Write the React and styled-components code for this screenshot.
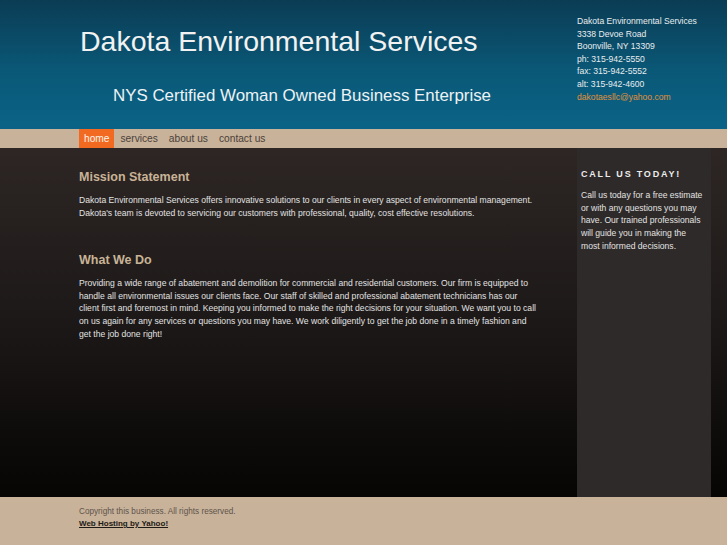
import styled, { createGlobalStyle } from 'styled-components'

const GlobalStyle = createGlobalStyle`
  html, body {
    margin: 0;
    padding: 0;
    background: #c8b29a;
  }
  body {
    font-family: "Liberation Sans", Arial, sans-serif;
  }
`

const Page = styled.div`
  display: flex;
  flex-direction: column;
  width: 727px;
  height: 545px;
  overflow: hidden;
`

const Header = styled.header`
  height: 129px;
  background: linear-gradient(to bottom, #0b3c54 0%, #0a5877 55%, #0a6386 100%);
  display: flex;
`

const Inner = styled.div`
  display: flex;
  width: 632px;
  margin-left: 79px;
`

const Branding = styled.div`
  flex: 1;
  display: flex;
  flex-direction: column;
  padding-top: 24px;
`

const Title = styled.h1`
  margin: 0 0 0 1px;
  font-weight: normal;
  font-size: 28.5px;
  line-height: 34px;
  color: #f2f2f2;
`

const Tagline = styled.div`
  margin: 28px 0 0 34px;
  font-size: 16.9px;
  line-height: 20px;
  color: #eef2f4;
`

const Contact = styled.address`
  width: 134px;
  padding-top: 15px;
  font-style: normal;
  font-size: 8.6px;
  line-height: 12.6px;
  color: #e8ecee;

  a {
    color: #e0913a;
    text-decoration: none;
  }
`

const Nav = styled.nav`
  height: 19px;
  background: #c8b29a;
  display: flex;
`

const NavItem = styled.a`
  display: flex;
  align-items: center;
  padding: 0 5px 0 ${p => (p.$first ? '5px' : '6px')};
  font-size: 10.2px;
  color: ${p => (p.$active ? '#fff4ea' : '#4b4139')};
  background: ${p => (p.$active ? '#f26a22' : 'transparent')};
  text-decoration: none;
`

const Body = styled.div`
  flex: 1;
  display: flex;
  background: linear-gradient(to bottom, #2d2624 0%, #1e1a19 45%, #060504 100%);
`

const Main = styled.main`
  width: 460px;
  margin-right: 38px;
  padding-top: 21px;
`

const Heading = styled.h2`
  margin: 0 0 9px 0;
  font-size: 12.5px;
  line-height: 16px;
  font-weight: bold;
  color: #c8b396;
`

const Para = styled.p`
  margin: 0 0 ${p => p.$gap || 0}px 0;
  font-size: 8.6px;
  line-height: 12.6px;
  color: #e2e2e2;
`

const Sidebar = styled.aside`
  width: 134px;
  background: #2e2a29;
  padding: 20px 4px 0 4px;
  box-sizing: border-box;
`

const SideHeading = styled.h3`
  margin: 0 0 9px 0;
  font-size: 9px;
  line-height: 12px;
  letter-spacing: 1.8px;
  font-weight: bold;
  color: #ececec;
`

const SideText = styled.p`
  margin: 0;
  font-size: 8.6px;
  line-height: 12.7px;
  color: #e2e2e2;
`

const Footer = styled.footer`
  height: 48px;
  background: #c8b29a;
  display: flex;
`

const FooterInner = styled.div`
  margin-left: 79px;
  padding-top: 9px;
  font-size: 8.2px;
  line-height: 12px;
  color: #5e544b;

  a {
    display: block;
    font-size: 8px;
    font-weight: bold;
    color: #1f1a16;
    text-decoration: underline;
  }
`

export default function App() {
  const links = ['home', 'services', 'about us', 'contact us']

  return (
    <>
      <GlobalStyle />
      <Page>
        <Header>
          <Inner>
            <Branding>
              <Title>Dakota Environmental Services</Title>
              <Tagline>NYS Certified Woman Owned Business Enterprise</Tagline>
            </Branding>
            <Contact>
              Dakota Environmental Services<br />
              3338 Devoe Road<br />
              Boonville, NY 13309<br />
              ph: 315-942-5550<br />
              fax: 315-942-5552<br />
              alt: 315-942-4600<br />
              <a href="#">dakotaesllc@yahoo.com</a>
            </Contact>
          </Inner>
        </Header>

        <Nav>
          <Inner>
            {links.map((l, i) => (
              <NavItem key={l} href="#" $active={i === 0} $first={i === 0}>{l}</NavItem>
            ))}
          </Inner>
        </Nav>

        <Body>
          <Inner>
            <Main>
              <Heading>Mission Statement</Heading>
              <Para $gap={33}>
                Dakota Environmental Services offers innovative solutions to our clients in every aspect of environmental management.
                Dakota's team is devoted to servicing our customers with professional, quality, cost effective resolutions.
              </Para>
              <Heading>What We Do</Heading>
              <Para>
                Providing a wide range of abatement and demolition for commercial and residential customers. Our firm is equipped to
                handle all environmental issues our clients face. Our staff of skilled and professional abatement technicians has our
                client first and foremost in mind. Keeping you informed to make the right decisions for your situation. We want you to call
                on us again for any services or questions you may have. We work diligently to get the job done in a timely fashion and
                get the job done right!
              </Para>
            </Main>
            <Sidebar>
              <SideHeading>CALL US TODAY!</SideHeading>
              <SideText>
                Call us today for a free estimate or with any questions you may have. Our trained professionals will guide you in making the most informed decisions.
              </SideText>
            </Sidebar>
          </Inner>
        </Body>

        <Footer>
          <FooterInner>
            Copyright this business. All rights reserved.
            <a href="#">Web Hosting by Yahoo!</a>
          </FooterInner>
        </Footer>
      </Page>
    </>
  )
}
